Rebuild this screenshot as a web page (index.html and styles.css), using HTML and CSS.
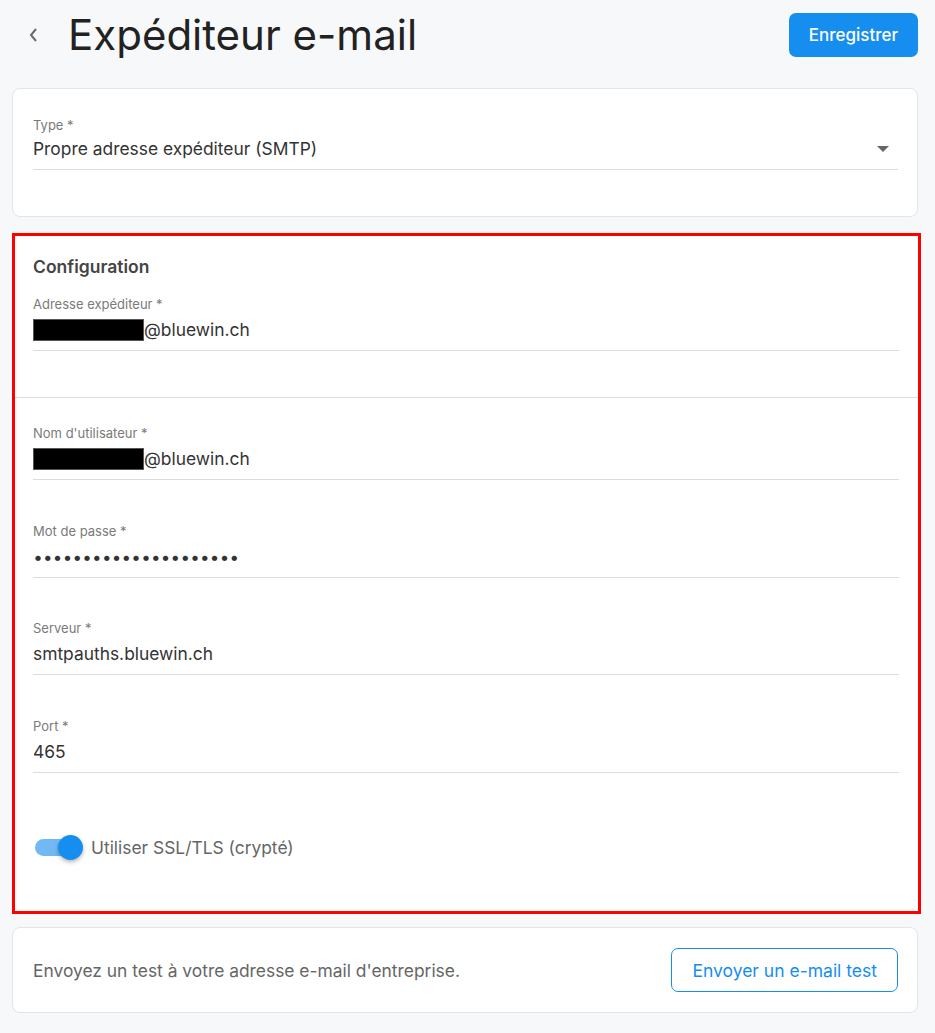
FILE: index.html
```html
<!DOCTYPE html>
<html lang="fr">
<head>
<meta charset="utf-8">
<title>Expéditeur e-mail</title>
<link rel="stylesheet" href="styles.css">
</head>
<body>
<div class="page">
  <header class="header">
    <div class="header-left">
      <button class="back" aria-label="Retour">
        <svg width="10" height="16" viewBox="0 0 10 16"><path d="M8 2 L3 8 L8 14" fill="none" stroke="#6b6b6b" stroke-width="2"/></svg>
      </button>
      <h1 class="title">Expéditeur e-mail</h1>
    </div>
    <button class="btn-primary">Enregistrer</button>
  </header>

  <section class="card card-type">
    <div class="field">
      <div class="field-label">Type *</div>
      <div class="field-input select">
        <span class="value">Propre adresse expéditeur (SMTP)</span>
        <span class="caret"></span>
      </div>
    </div>
  </section>

  <section class="card card-config">
    <div class="config-top">
      <h2 class="section-title">Configuration</h2>
      <div class="field">
        <div class="field-label">Adresse expéditeur *</div>
        <div class="field-input"><span class="redact"></span><span class="value">@bluewin.ch</span></div>
      </div>
    </div>
    <div class="config-body">
      <div class="field">
        <div class="field-label">Nom d'utilisateur *</div>
        <div class="field-input"><span class="redact"></span><span class="value">@bluewin.ch</span></div>
      </div>
      <div class="field">
        <div class="field-label">Mot de passe *</div>
        <div class="field-input"><span class="value dots">•••••••••••••••••••••</span></div>
      </div>
      <div class="field">
        <div class="field-label">Serveur *</div>
        <div class="field-input"><span class="value">smtpauths.bluewin.ch</span></div>
      </div>
      <div class="field">
        <div class="field-label">Port *</div>
        <div class="field-input"><span class="value">465</span></div>
      </div>
      <label class="toggle-row">
        <span class="switch"><span class="track"></span><span class="thumb"></span></span>
        <span class="toggle-label">Utiliser SSL/TLS (crypté)</span>
      </label>
    </div>
  </section>

  <section class="card card-test">
    <p class="test-text">Envoyez un test à votre adresse e-mail d'entreprise.</p>
    <button class="btn-outline">Envoyer un e-mail test</button>
  </section>
</div>
</body>
</html>
```

FILE: styles.css
```css
* { box-sizing: border-box; }
html, body { margin: 0; padding: 0; }
body {
  background: #f7f8f9;
  font-family: Inter, "Noto Sans", "Liberation Sans", sans-serif;
  color: #333;
}
.page {
  padding: 13px 17px 20px 12px;
}
.header {
  display: flex;
  align-items: center;
  justify-content: space-between;
  height: 44px;
  margin-bottom: 31px;
}
.header-left {
  display: flex;
  align-items: center;
}
.back {
  border: 0;
  background: none;
  padding: 0;
  margin: 0 0 0 16px;
  width: 40px;
  height: 44px;
  display: flex;
  align-items: center;
  cursor: pointer;
}
.title {
  margin: 0;
  font-size: 42px;
  font-weight: 400;
  color: #222;
  line-height: 44px;
  letter-spacing: 0;
}
.btn-primary {
  height: 44px;
  padding: 0 20px;
  border: 0;
  border-radius: 7px;
  background: #168ef0;
  color: #fff;
  font-family: inherit;
  font-size: 17px;
  font-weight: 500;
  margin-right: 0;
}
.card {
  background: #fff;
  border: 1px solid #e2e4e6;
  border-radius: 8px;
}
.card-type {
  padding: 28px 19px 0 20px;
  height: 129px;
  margin-bottom: 16px;
}
.field-label {
  font-size: 13px;
  line-height: 16px;
  color: #7a7a7a;
}
.field-input {
  display: flex;
  align-items: center;
  margin-top: 6px;
  height: 33px;
  padding-bottom: 8px;
  border-bottom: 1px solid #dcdcdc;
}
.card-type .field-input { margin-top: 4px; height: 33px; padding-bottom: 8px; }
.value {
  font-size: 17.4px;
  line-height: 24px;
  color: #333;
}
.select { justify-content: space-between; }
.caret {
  width: 0;
  height: 0;
  border-left: 6px solid transparent;
  border-right: 6px solid transparent;
  border-top: 6px solid #666;
  margin-right: 9px;
}
.card-config {
  border: 3px solid #ff0000;
  border-radius: 0;
  margin-right: -3px;
  margin-bottom: 13px;
}
.config-top {
  padding: 19px 19px 46px 18px;
  border-bottom: 1px solid #dcdcdc;
}
.section-title {
  margin: 0 0 17px;
  font-size: 17.5px;
  line-height: 24px;
  font-weight: 600;
  color: #444;
}
.config-body {
  padding: 27px 19px 43.5px 18px;
}
.config-body .field { margin-bottom: 42.5px; }
.config-body .field:nth-child(4) { margin-bottom: 55px; }
.redact {
  display: inline-block;
  width: 111px;
  height: 22px;
  background: #000;
  border: 1px solid #555;
}
.dots {
  letter-spacing: 1.75px;
  padding-left: 1px;
  font-size: 17px;
  font-weight: 700;
}
.toggle-row {
  display: flex;
  align-items: center;
  height: 40px;
}
.switch {
  position: relative;
  width: 48px;
  height: 25px;
  margin-left: 2px;
  flex: none;
}
.track {
  position: absolute;
  left: 0;
  top: 4px;
  width: 44px;
  height: 17px;
  border-radius: 9px;
  background: #72b9f4;
}
.thumb {
  position: absolute;
  right: 0;
  top: 0;
  width: 25px;
  height: 25px;
  border-radius: 50%;
  background: #168ef0;
  box-shadow: 0 2px 4px rgba(0,0,0,0.3);
}
.toggle-label {
  margin-left: 8px;
  font-size: 17.4px;
  color: #666;
}
.card-test {
  display: flex;
  align-items: center;
  justify-content: space-between;
  padding: 20px 19px 20px 20px;
  height: 86px;
}
.test-text {
  margin: 0;
  font-size: 17.4px;
  color: #666;
}
.btn-outline {
  height: 44px;
  padding: 0 20px;
  background: #fff;
  border: 1px solid #168ef0;
  border-radius: 7px;
  color: #168ef0;
  font-family: inherit;
  font-size: 17.5px;
  font-weight: 400;
}
```
